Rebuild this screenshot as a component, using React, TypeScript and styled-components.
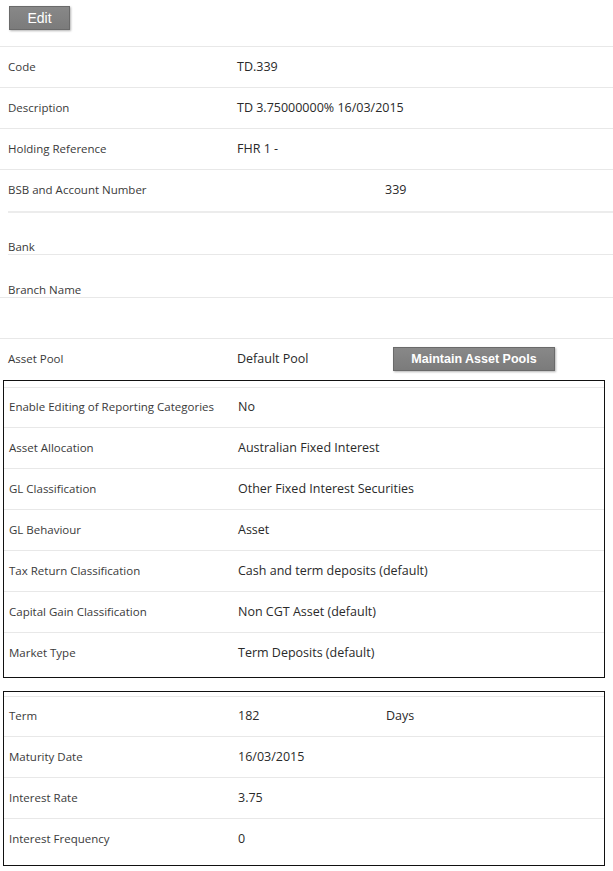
import React from "react";
import styled, { createGlobalStyle } from "styled-components";

const GlobalStyle = createGlobalStyle`
  body {
    margin: 0;
    background: #fff;
    font-family: "Open Sans", "Noto Sans", sans-serif;
    color: #333;
  }
`;

const Page = styled.div`
  width: 613px;
`;

const Toolbar = styled.div`
  height: 47px;
  padding: 6px 9px 0;
  box-sizing: border-box;
  border-bottom: 1px solid #e8e8e8;
`;

const GreyButton = styled.button<{ $width: number }>`
  width: ${({ $width }) => $width}px;
  height: 24px;
  padding: 0;
  background: linear-gradient(#888, #7b7b7b);
  border: 1px solid #6a6a6a;
  box-shadow: 1px 1px 2px #b5b5b5;
  color: #fff;
  font-family: "Liberation Sans", Arial, sans-serif;
  font-size: 14px;
  cursor: pointer;
`;

const BoldButton = styled(GreyButton)`
  font-weight: bold;
  font-size: 12.5px;
`;

interface RowProps {
  readonly $height?: number;
  readonly $bottom?: boolean;
  readonly $inset?: number;
  readonly $lead?: number;
}
const Row = styled.div<RowProps>`
  display: grid;
  grid-template-columns: 229px 1fr;
  align-items: ${({ $bottom }) => ($bottom ? "end" : "center")};
  height: ${({ $height }) => $height ?? 41}px;
  padding-left: ${({ $lead }) => $lead ?? 8}px;
  padding-bottom: ${({ $bottom }) => ($bottom ? 0 : 2)}px;
  margin-left: ${({ $inset }) => $inset ?? 0}px;
  box-sizing: border-box;
  border-bottom: 1px solid #e8e8e8;
  &:last-child {
    border-bottom: none;
  }
`;

const Label = styled.div`
  font-size: 11.5px;
  color: #3a3a3a;
  white-space: nowrap;
`;

const Value = styled.div`
  display: flex;
  align-items: center;
  font-size: 12.5px;
  color: #2a2a2a;
  white-space: nowrap;
`;

const Cell = styled.span<{ $width: number }>`
  display: inline-block;
  width: ${({ $width }) => $width}px;
`;

const Divider = styled.div`
  margin-left: 8px;
  border-top: 2px solid #ececec;
`;

const Section = styled.div``;

const Box = styled.div<{ $top: number; $bottom: number }>`
  margin: 0 8px 13px 3px;
  padding: ${({ $top, $bottom }) => `${$top}px 0 ${$bottom}px`};
  border: 1px solid #111;
  & > div:first-child {
    border-top: 1px solid #e8e8e8;
  }
`;

const reporting: [string, string][] = [
  ["Enable Editing of Reporting Categories", "No"],
  ["Asset Allocation", "Australian Fixed Interest"],
  ["GL Classification", "Other Fixed Interest Securities"],
  ["GL Behaviour", "Asset"],
  ["Tax Return Classification", "Cash and term deposits (default)"],
  ["Capital Gain Classification", "Non CGT Asset (default)"],
  ["Market Type", "Term Deposits (default)"],
];

export default function App() {
  return (
    <Page>
      <GlobalStyle />
      <Toolbar>
        <GreyButton $width={61}>Edit</GreyButton>
      </Toolbar>
      <Section>
        <Row>
          <Label>Code</Label>
          <Value>TD.339</Value>
        </Row>
        <Row>
          <Label>Description</Label>
          <Value>TD 3.75000000% 16/03/2015</Value>
        </Row>
        <Row>
          <Label>Holding Reference</Label>
          <Value>FHR 1 -</Value>
        </Row>
        <Row>
          <Label>BSB and Account Number</Label>
          <Value>
            <Cell $width={148} />
            339
          </Value>
        </Row>
      </Section>
      <Divider />
      <Section>
        <Row $height={42} $bottom $inset={8} $lead={0}>
          <Label>Bank</Label>
          <Value />
        </Row>
        <Row $height={43} $bottom>
          <Label>Branch Name</Label>
          <Value />
        </Row>
        <Row>
          <Label />
          <Value />
        </Row>
        <Row>
          <Label>Asset Pool</Label>
          <Value>
            <Cell $width={156}>Default Pool</Cell>
            <BoldButton $width={162}>Maintain Asset Pools</BoldButton>
          </Value>
        </Row>
      </Section>
      <Box $top={6} $bottom={3}>
        {reporting.map(([label, value]) => (
          <Row key={label} $lead={5}>
            <Label>{label}</Label>
            <Value>{value}</Value>
          </Row>
        ))}
      </Box>
      <Box $top={4} $bottom={5}>
        <Row $lead={5}>
          <Label>Term</Label>
          <Value>
            <Cell $width={148}>182</Cell>
            Days
          </Value>
        </Row>
        <Row $lead={5}>
          <Label>Maturity Date</Label>
          <Value>16/03/2015</Value>
        </Row>
        <Row $lead={5}>
          <Label>Interest Rate</Label>
          <Value>3.75</Value>
        </Row>
        <Row $lead={5}>
          <Label>Interest Frequency</Label>
          <Value>0</Value>
        </Row>
      </Box>
    </Page>
  );
}
